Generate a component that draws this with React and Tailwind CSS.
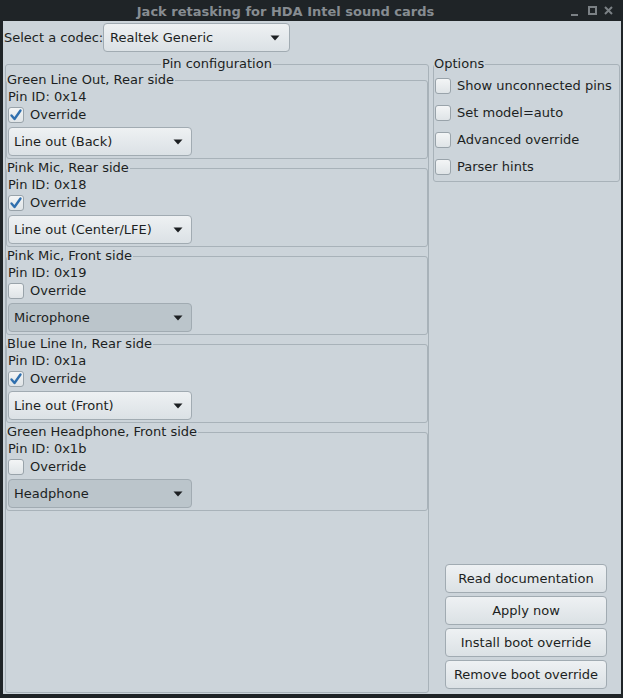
import React from "react";

const pins = [
  { name: "Green Line Out, Rear side", id: "0x14", override: true, value: "Line out (Back)" },
  { name: "Pink Mic, Rear side", id: "0x18", override: true, value: "Line out (Center/LFE)" },
  { name: "Pink Mic, Front side", id: "0x19", override: false, value: "Microphone" },
  { name: "Blue Line In, Rear side", id: "0x1a", override: true, value: "Line out (Front)" },
  { name: "Green Headphone, Front side", id: "0x1b", override: false, value: "Headphone" },
];

const options = ["Show unconnected pins", "Set model=auto", "Advanced override", "Parser hints"];

const buttons = ["Read documentation", "Apply now", "Install boot override", "Remove boot override"];

function Arrow() {
  return (
    <svg width="10" height="6" viewBox="0 0 10 6" className="shrink-0">
      <polygon points="0.5,0.5 9.5,0.5 5,5.5" fill="#1c1f22" />
    </svg>
  );
}

function Checkbox({ checked }) {
  return (
    <span className="relative w-[16px] h-[16px] shrink-0 rounded-[3px] border border-[#99a3aa] bg-gradient-to-b from-[#f3f5f6] to-[#dfe4e7]">
      {checked && (
        <svg width="16" height="16" viewBox="0 0 16 16" className="absolute left-[-1px] top-[-1px]">
          <path d="M3.5 8.5 L6.5 12 L12.5 3.5" fill="none" stroke="#2f6fae" strokeWidth="2.4" strokeLinecap="round" strokeLinejoin="round" />
        </svg>
      )}
    </span>
  );
}

function Combo({ value, disabled, className }) {
  return (
    <div
      className={
        "flex items-center justify-between rounded-[4px] border border-[#a1abb2] " +
        (disabled ? "bg-[#bbc5cb] " : "bg-gradient-to-b from-[#eef1f3] to-[#dbe1e5] ") +
        className
      }
    >
      <span className="whitespace-nowrap">{value}</span>
      <Arrow />
    </div>
  );
}

function PinFrame({ pin }) {
  return (
    <fieldset className="border border-[#a8b2b9] rounded-[3px] pb-[2px] mb-[1px]">
      <legend className="leading-4 pr-[1px]">{pin.name}</legend>
      <div className="h-[18px] leading-[18px] pl-[1px]">Pin ID: {pin.id}</div>
      <div className="h-[18px] flex items-center gap-[6px] pl-[1px]">
        <Checkbox checked={pin.override} />
        <span>Override</span>
      </div>
      <Combo
        value={pin.value}
        disabled={!pin.override}
        className="ml-[1px] mt-[3px] h-[29px] w-[184px] pl-[5px] pr-[8px]"
      />
    </fieldset>
  );
}

export default function App() {
  return (
    <div className="w-[623px] h-[698px] flex flex-col bg-[#1f2427] font-['DejaVu_Sans',sans-serif] text-[13px] text-[#1c1f22]">
      <div className="h-[21px] flex items-center shrink-0">
        <div className="flex-1 text-center font-bold text-[#878d92] leading-none pt-[1px] whitespace-nowrap">
          Jack retasking for HDA Intel sound cards
        </div>
        <div className="flex items-center justify-end pr-[10px] w-[52px] shrink-0">
          <span className="w-[7px] h-[2px] bg-[#7b8185] mt-[8px]" />
          <span className="ml-[10px] w-[9px] h-[9px] border-2 border-[#7b8185]" />
          <svg width="9" height="9" viewBox="0 0 9 9" className="ml-[7px]">
            <path d="M1 1 L8 8 M8 1 L1 8" stroke="#7b8185" strokeWidth="2" />
          </svg>
        </div>
      </div>

      <div className="flex-1 flex flex-col ml-[3px] mr-[2px] mb-[4px] bg-[#ccd4da]">
        <div className="flex items-center pl-[1px] pt-[2px]">
          <span className="w-[99px] shrink-0 whitespace-nowrap">Select a codec:</span>
          <Combo value="Realtek Generic" className="h-[29px] w-[187px] pl-[6px] pr-[9px]" />
        </div>

        <div className="flex-1 flex mt-[4px] mb-[1px]">
          <fieldset className="ml-[2px] w-[424px] flex flex-col border border-[#a8b2b9] rounded-[3px]">
            <legend className="mx-auto px-[1px] leading-4">Pin configuration</legend>
            {pins.map((p) => (
              <PinFrame key={p.id} pin={p} />
            ))}
          </fieldset>

          <div className="ml-[4px] w-[187px] flex flex-col">
            <fieldset className="border border-[#a8b2b9] rounded-[3px] pb-[1px]">
              <legend className="leading-4 pr-[1px]">Options</legend>
              {options.map((o) => (
                <div key={o} className="h-[27px] flex items-center gap-[6px] pl-[1px]">
                  <Checkbox checked={false} />
                  <span className="whitespace-nowrap">{o}</span>
                </div>
              ))}
            </fieldset>
            <div className="flex-1" />
            <div className="flex flex-col items-start pl-[12px] gap-[3px] pb-[4px]">
              {buttons.map((b) => (
                <button
                  key={b}
                  className="w-[162px] h-[29px] rounded-[4px] border border-[#a1abb2] bg-gradient-to-b from-[#eef1f3] to-[#dbe1e5] text-center whitespace-nowrap"
                >
                  {b}
                </button>
              ))}
            </div>
          </div>
        </div>
      </div>
    </div>
  );
}
